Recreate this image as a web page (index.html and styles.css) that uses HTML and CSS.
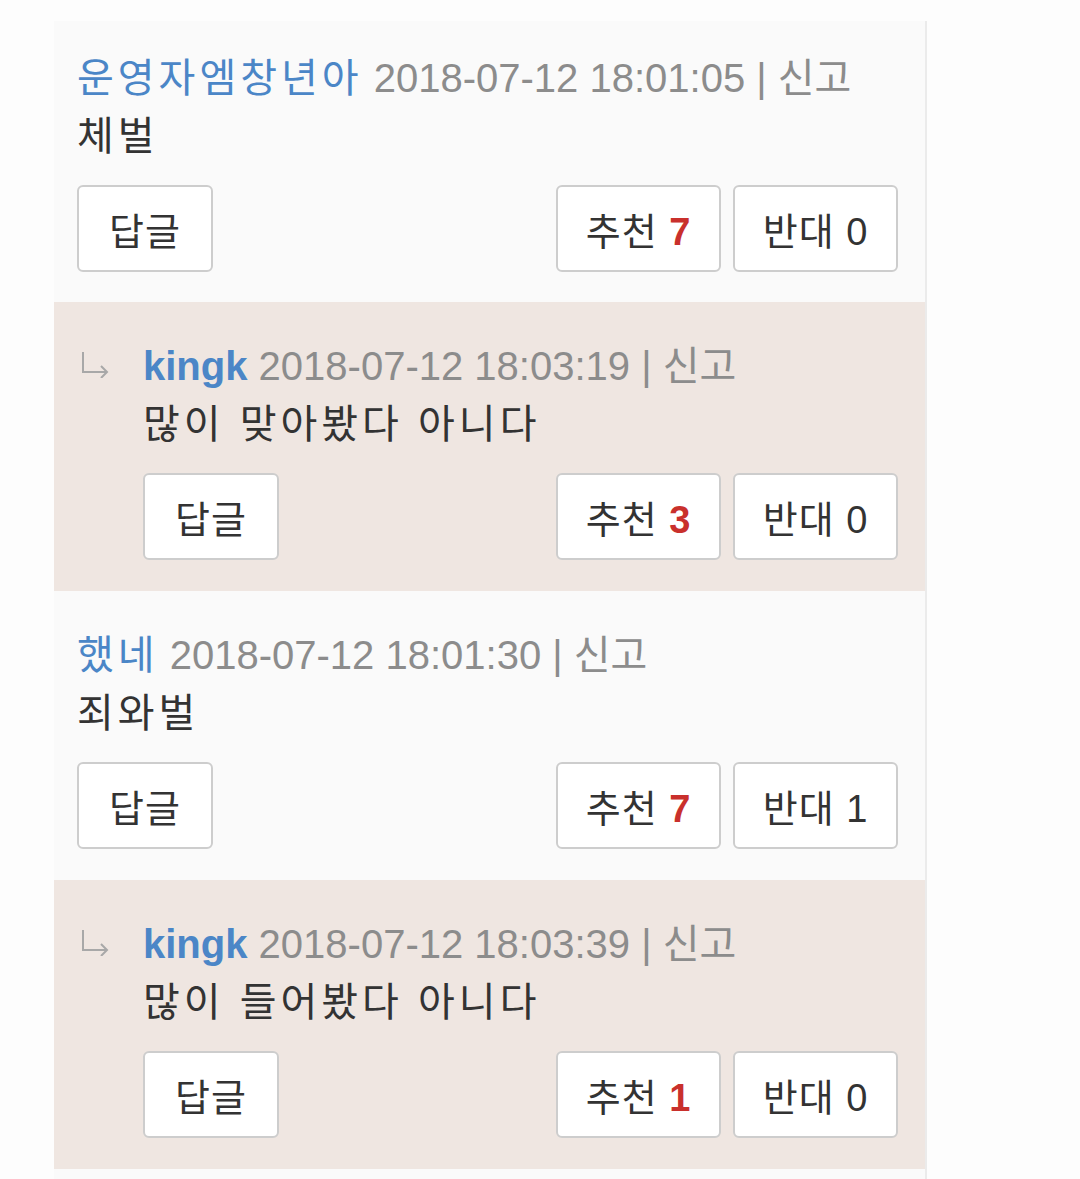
FILE: index.html
```html
<!DOCTYPE html>
<html lang="ko">
<head>
	<meta charset="UTF-8">
	<title>댓글</title>
	<link rel="stylesheet" href="styles.css">
</head>
<body>
	<div class="comment-list">
		<div class="comment-item">
			<div class="comment-body">
				<p class="meta"><span class="nick">운영자엠창년아</span> <span class="date">2018-07-12 18:01:05 | 신고</span></p>
				<p class="text">체벌</p>
				<div class="btn-row">
					<button class="btn">답글</button>
					<div class="vote">
						<button class="btn btn-vote">추천 <b class="up">7</b></button>
						<button class="btn btn-vote">반대 0</button>
					</div>
				</div>
			</div>
		</div>
		<div class="comment-item reply">
			<span class="reply-mark"><svg width="30" height="26" viewBox="0 0 30 26"><path d="M3 0 V20 H27 M21 14 L27 20 L21 26" fill="none" stroke="#a8a8a8" stroke-width="2"/></svg></span>
			<div class="comment-body">
				<p class="meta"><span class="nick bold">kingk</span> <span class="date">2018-07-12 18:03:19 | 신고</span></p>
				<p class="text">많이 맞아봤다 아니다</p>
				<div class="btn-row">
					<button class="btn">답글</button>
					<div class="vote">
						<button class="btn btn-vote">추천 <b class="up">3</b></button>
						<button class="btn btn-vote">반대 0</button>
					</div>
				</div>
			</div>
		</div>
		<div class="comment-item">
			<div class="comment-body">
				<p class="meta"><span class="nick">했네</span> <span class="date">2018-07-12 18:01:30 | 신고</span></p>
				<p class="text">죄와벌</p>
				<div class="btn-row">
					<button class="btn">답글</button>
					<div class="vote">
						<button class="btn btn-vote">추천 <b class="up">7</b></button>
						<button class="btn btn-vote">반대 1</button>
					</div>
				</div>
			</div>
		</div>
		<div class="comment-item reply">
			<span class="reply-mark"><svg width="30" height="26" viewBox="0 0 30 26"><path d="M3 0 V20 H27 M21 14 L27 20 L21 26" fill="none" stroke="#a8a8a8" stroke-width="2"/></svg></span>
			<div class="comment-body">
				<p class="meta"><span class="nick bold">kingk</span> <span class="date">2018-07-12 18:03:39 | 신고</span></p>
				<p class="text">많이 들어봤다 아니다</p>
				<div class="btn-row">
					<button class="btn">답글</button>
					<div class="vote">
						<button class="btn btn-vote">추천 <b class="up">1</b></button>
						<button class="btn btn-vote">반대 0</button>
					</div>
				</div>
			</div>
		</div>
		<div class="comment-tail"></div>
	</div>
</body>
</html>
```
FILE: styles.css
```css
* {
	padding: 0;
	margin: 0;
	box-sizing: border-box;
}
html, body {
	background: #fdfdfd;
	font-family: "Liberation Sans", "Noto Sans CJK KR", sans-serif;
	color: #333;
}
.comment-list {
	width: 873px;
	margin: 21px 0 0 54px;
	border-right: 2px solid #ebebeb;
	background: #fafafa;
}
.comment-item {
	display: flex;
	padding: 35px 27px 31px 23px;
	background: #fafafa;
}
.comment-item:first-child {
	padding-top: 28px;
	padding-bottom: 30px;
}
.comment-item.reply {
	background: #efe6e1;
}
.reply-mark {
	width: 66px;
	flex: none;
	padding: 15px 0 0 3px;
}
.comment-body {
	flex: 1;
}
.meta, .text {
	font-size: 40px;
	line-height: 58px;
	white-space: nowrap;
}
.nick {
	color: #4b86c7;
	letter-spacing: 4px;
}
.nick.bold {
	font-weight: bold;
	letter-spacing: 0;
}
.date {
	color: #8c8c8c;
}
.text {
	color: #333;
	letter-spacing: 4px;
}
.btn-row {
	display: flex;
	justify-content: space-between;
	margin-top: 20px;
}
.vote {
	display: flex;
	gap: 12px;
}
.btn {
	height: 87px;
	width: 136px;
	border: 2px solid #cdcdcd;
	border-radius: 6px;
	background: #fff;
	color: #333;
	font-family: inherit;
	font-size: 38px;
	letter-spacing: 1px;
}
.btn-vote {
	width: 165px;
}
.up {
	color: #c9302c;
}
.comment-tail {
	height: 13px;
}
```
